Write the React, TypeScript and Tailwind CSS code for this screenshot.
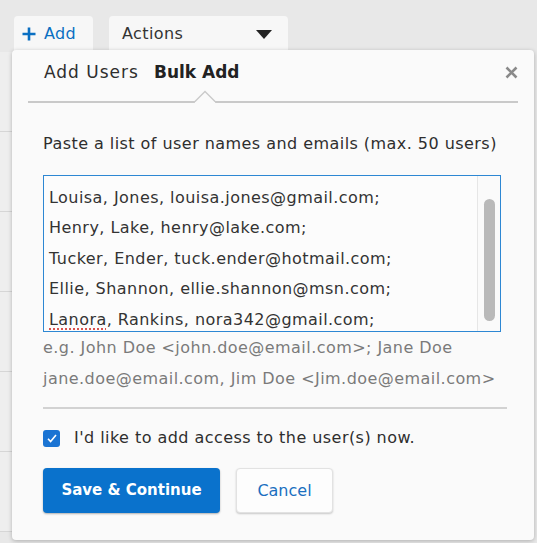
import React from "react";

const users = [
  "Jimmy, Perry, jimmy.perry@gmail.com;",
  "Louisa, Jones, louisa.jones@gmail.com;",
  "Henry, Lake, henry@lake.com;",
  "Tucker, Ender, tuck.ender@hotmail.com;",
  "Ellie, Shannon, ellie.shannon@msn.com;",
];

function TableRows() {
  return (
    <div className="flex flex-col">
      {[0, 1, 2, 3, 4, 5].map((i) => (
        <div key={i} className="h-[80px] border-b border-[#d6d6d6]" />
      ))}
    </div>
  );
}

export default function App() {
  return (
    <div
      className="relative w-[537px] h-[543px] overflow-hidden bg-[#e8e8e8] text-[#3c3c3c]"
      style={{ fontFamily: '"DejaVu Sans", "Noto Sans", sans-serif' }}
    >
      {/* toolbar */}
      <div className="flex items-start gap-[16px] pl-[14px] pt-[16px]">
        <div className="flex h-[36px] w-[79px] items-center gap-[8px] rounded-t-[4px] bg-[#f7f7f7] pl-[8px] text-[16px] tracking-[0.3px] text-[#0a6fc2]">
          <svg width="14" height="14" viewBox="0 0 14 14">
            <path d="M7 0.5v13M0.5 7h13" stroke="#0a6fc2" strokeWidth="2.6" />
          </svg>
          <span>Add</span>
        </div>
        <div className="flex h-[36px] w-[179px] items-center justify-between rounded-t-[4px] bg-[#f7f7f7] pl-[13px] pr-[16px] text-[16px] tracking-[0.4px] text-[#333]">
          <span>Actions</span>
          <svg width="16" height="9" viewBox="0 0 16 9">
            <path d="M0 0h16L8 9z" fill="#222" />
          </svg>
        </div>
      </div>

      {/* table behind the popover */}
      <div className="w-[14px] border-r border-[#d6d6d6] bg-[#eeeeee]">
        <TableRows />
      </div>

      {/* bulk add popover */}
      <div className="absolute left-[12px] top-[50px] h-[490px] w-[522px] rounded-[4px] bg-[#fafafa] shadow-[0_1px_4px_rgba(0,0,0,0.25)]">
        <div className="relative mx-[16px] flex h-[53px] items-center gap-[15px] border-b-2 border-[#c9c9c9] pb-[5px] pl-[16px] text-[17px]">
          <span className="tracking-[1px] text-[#2e2e2e]">Add Users</span>
          <span className="font-bold text-[#222]">Bulk Add</span>
          <svg
            className="absolute left-[166px] top-[40px]"
            width="22"
            height="13"
            viewBox="0 0 22 13"
          >
            <path d="M0 12.5 L11 1.5 L22 12.5" fill="#fafafa" stroke="#c9c9c9" strokeWidth="1.3" />
            <path d="M1 13h20" stroke="#fafafa" strokeWidth="2" />
          </svg>
          <svg
            className="absolute right-0 top-[16px]"
            width="13"
            height="13"
            viewBox="0 0 13 13"
          >
            <path d="M1.5 1.5l10 10M11.5 1.5l-10 10" stroke="#8a8a8a" strokeWidth="2.6" />
          </svg>
        </div>

        <div className="px-[31px] tracking-[0.45px]">
          <p className="mt-[29px] text-[16px] leading-[24px] text-[#2e2e2e]">
            Paste a list of user names and emails (max. 50 users)
          </p>

          <div className="relative mt-[19px] h-[157px] w-[458px] overflow-hidden border border-[#2d87d3] bg-[#fcfcfc]">
            <div className="-mt-[24px] pl-[5px] text-[16px] leading-[30.5px] text-[#333]">
              {users.map((u) => (
                <div key={u} className="whitespace-nowrap">
                  {u}
                </div>
              ))}
              <div className="whitespace-nowrap">
                <span className="underline decoration-dotted decoration-[#d9534f] decoration-2 underline-offset-[4px]">
                  Lanora
                </span>
                , Rankins, nora342@gmail.com;
              </div>
            </div>
            <div className="absolute right-0 top-0 h-full w-[23px] border-l border-[#e6e6e6] bg-[#fafafa]">
              <div className="ml-[6px] mt-[23px] h-[122px] w-[11px] rounded-full bg-[#b9b9b9]" />
            </div>
          </div>

          <div className="mt-0 text-[16px] leading-[31px] text-[#7a7a7a]">
            <div>e.g. John Doe &lt;john.doe@email.com&gt;; Jane Doe</div>
            <div>jane.doe@email.com, Jim Doe &lt;Jim.doe@email.com&gt;</div>
          </div>

          <div className="mt-[13px] mr-[-4px] border-t-2 border-[#d2d2d2]" />

          <label className="mt-[17px] flex items-center gap-[14px] text-[16px] text-[#2e2e2e]">
            <span className="flex h-[17px] w-[17px] items-center justify-center rounded-[3px] bg-[#1b74d3]">
              <svg width="10" height="9" viewBox="0 0 10 9">
                <path d="M1 4.8l2.6 2.8L9 1" fill="none" stroke="#fff" strokeWidth="1.6" />
              </svg>
            </span>
            <span>I'd like to add access to the user(s) now.</span>
          </label>

          <div className="mt-[18px] flex gap-[16px] tracking-normal">
            <button className="h-[45px] w-[177px] rounded-[4px] bg-[#0a72cc] text-[15px] font-bold text-white shadow-[0_1px_2px_rgba(0,0,0,0.3)]">
              Save &amp; Continue
            </button>
            <button className="h-[45px] w-[97px] rounded-[4px] border border-[#e2e2e2] bg-[#fdfdfd] text-[16px] text-[#1a6fc0] shadow-[0_1px_2px_rgba(0,0,0,0.2)]">
              Cancel
            </button>
          </div>
        </div>
      </div>
    </div>
  );
}
